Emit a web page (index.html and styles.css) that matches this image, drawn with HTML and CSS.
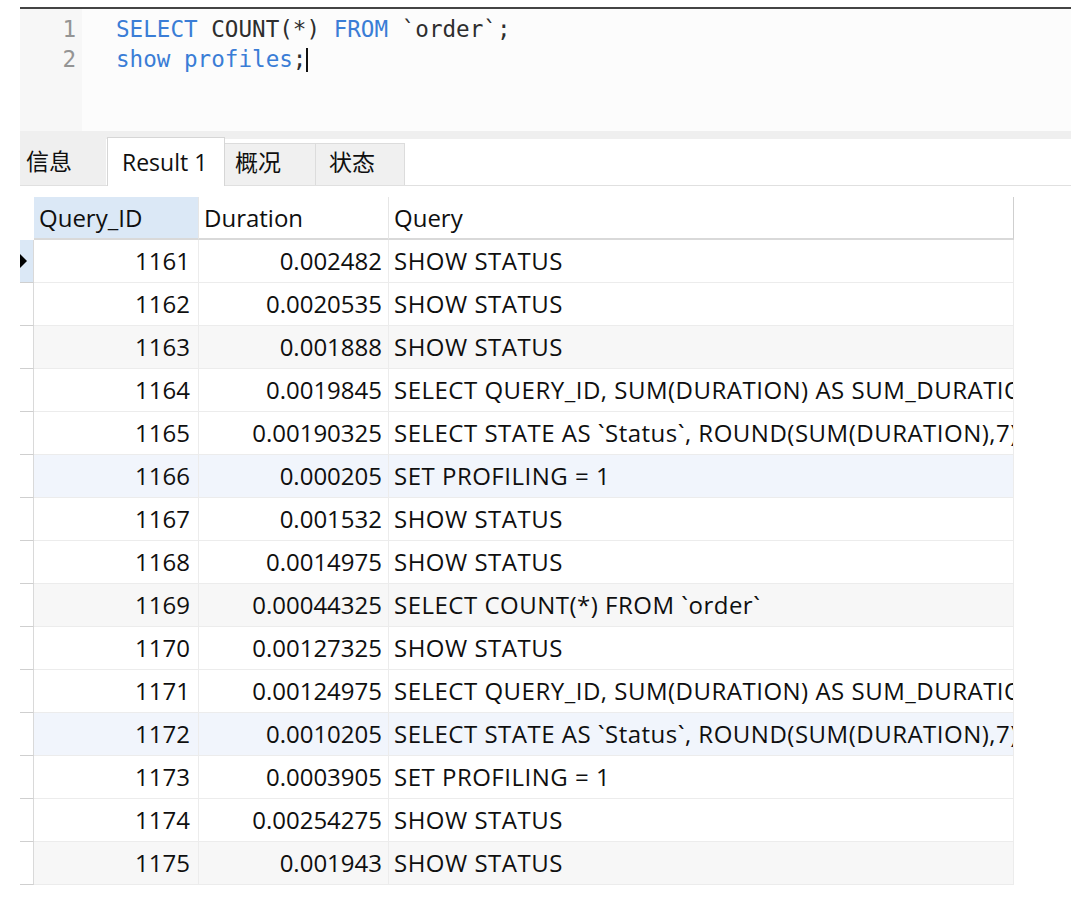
FILE: index.html
```html
<!DOCTYPE html>
<html lang="zh">
<head>
<meta charset="utf-8">
<title>Profiles</title>
<link rel="stylesheet" href="styles.css">
</head>
<body>
<div class="app">
  <div class="topline"></div>
  <div class="editor">
    <div class="gutter"><div>1</div><div>2</div></div>
    <div class="code">
      <div class="line"><span class="kw">SELECT</span> COUNT(*) <span class="kw">FROM</span> `order`;</div>
      <div class="line"><span class="kw">show profiles</span>;<span class="caret"></span></div>
    </div>
  </div>
  <div class="band"></div>
  <div class="tabs">
    <div class="tab tab-info">信息</div>
    <div class="tab tab-active">Result 1</div>
    <div class="tab tab-side tab-overview">概况</div>
    <div class="tab tab-side tab-status">状态</div>
  </div>
  <div class="grid">
    <div class="row head">
      <div class="c ind"></div>
      <div class="c id sel">Query_ID</div>
      <div class="c dur">Duration</div>
      <div class="c q last">Query</div>
    </div>
    <div class="row"><div class="c ind cur"><span class="tri"></span></div><div class="c id">1161</div><div class="c dur">0.002482</div><div class="c q">SHOW STATUS</div></div>
    <div class="row"><div class="c ind"></div><div class="c id">1162</div><div class="c dur">0.0020535</div><div class="c q">SHOW STATUS</div></div>
    <div class="row gray"><div class="c ind"></div><div class="c id">1163</div><div class="c dur">0.001888</div><div class="c q">SHOW STATUS</div></div>
    <div class="row"><div class="c ind"></div><div class="c id">1164</div><div class="c dur">0.0019845</div><div class="c q">SELECT QUERY_ID, SUM(DURATION) AS SUM_DURATION FROM INFORMATION_SCHEMA.PROFILING GROUP BY QUERY_ID</div></div>
    <div class="row"><div class="c ind"></div><div class="c id">1165</div><div class="c dur">0.00190325</div><div class="c q">SELECT STATE AS `Status`, ROUND(SUM(DURATION),7) AS `Duration`</div></div>
    <div class="row blue"><div class="c ind"></div><div class="c id">1166</div><div class="c dur">0.000205</div><div class="c q">SET PROFILING = 1</div></div>
    <div class="row"><div class="c ind"></div><div class="c id">1167</div><div class="c dur">0.001532</div><div class="c q">SHOW STATUS</div></div>
    <div class="row"><div class="c ind"></div><div class="c id">1168</div><div class="c dur">0.0014975</div><div class="c q">SHOW STATUS</div></div>
    <div class="row gray"><div class="c ind"></div><div class="c id">1169</div><div class="c dur">0.00044325</div><div class="c q">SELECT COUNT(*) FROM `order`</div></div>
    <div class="row"><div class="c ind"></div><div class="c id">1170</div><div class="c dur">0.00127325</div><div class="c q">SHOW STATUS</div></div>
    <div class="row"><div class="c ind"></div><div class="c id">1171</div><div class="c dur">0.00124975</div><div class="c q">SELECT QUERY_ID, SUM(DURATION) AS SUM_DURATION FROM INFORMATION_SCHEMA.PROFILING GROUP BY QUERY_ID</div></div>
    <div class="row blue"><div class="c ind"></div><div class="c id">1172</div><div class="c dur">0.0010205</div><div class="c q">SELECT STATE AS `Status`, ROUND(SUM(DURATION),7) AS `Duration`</div></div>
    <div class="row"><div class="c ind"></div><div class="c id">1173</div><div class="c dur">0.0003905</div><div class="c q">SET PROFILING = 1</div></div>
    <div class="row"><div class="c ind"></div><div class="c id">1174</div><div class="c dur">0.00254275</div><div class="c q">SHOW STATUS</div></div>
    <div class="row gray"><div class="c ind"></div><div class="c id">1175</div><div class="c dur">0.001943</div><div class="c q">SHOW STATUS</div></div>
  </div>
</div>
</body>
</html>
```
FILE: styles.css
```css
html, body {
  margin: 0;
  padding: 0;
  background: #ffffff;
}
body {
  font-family: "Open Sans", "Noto Sans CJK SC", sans-serif;
  font-size: 24px;
  color: #0f0f0f;
}
.app {
  padding-top: 7px;
  margin-left: 20px;
}
.topline {
  height: 2px;
  background: #444444;
}
.editor {
  display: flex;
  height: 122px;
  background: #fcfcfc;
  font-family: "DejaVu Sans Mono", "Liberation Mono", monospace;
  font-size: 22.6px;
  line-height: 30px;
}
.gutter {
  width: 56px;
  padding-right: 6px;
  padding-top: 5px;
  text-align: right;
  color: #949494;
  background: #f7f7f7;
}
.code {
  padding-left: 34px;
  padding-top: 5px;
  color: #2e2e2e;
}
.line {
  white-space: nowrap;
}
.kw {
  color: #3a7dd6;
}
.caret {
  display: inline-block;
  width: 2px;
  height: 24px;
  background: #111111;
  vertical-align: -5px;
}
.band {
  height: 8px;
  background: #efefef;
}
.tabs {
  display: flex;
  align-items: flex-end;
  height: 46px;
  border-bottom: 1px solid #e0e0e0;
  font-size: 23px;
  line-height: 30px;
}
.tab {
  box-sizing: border-box;
  padding-bottom: 9px;
  white-space: nowrap;
}
.tab-info {
  width: 86px;
  height: 46px;
  padding-top: 7px;
  padding-left: 6px;
  background: #efefef;
}
.tab-active {
  width: 118px;
  height: 49px;
  margin-left: 1px;
  margin-bottom: -1px;
  padding-top: 9px;
  padding-left: 14px;
  padding-bottom: 10px;
  background: #ffffff;
  border: 1px solid #d6d6d6;
  border-bottom: none;
}
.tab-side {
  height: 42px;
  padding-top: 3px;
  background: #f0f0f0;
  border: 1px solid #dcdcdc;
  border-bottom: none;
}
.tab-overview {
  width: 91px;
  padding-left: 10px;
  border-left: none;
}
.tab-status {
  width: 89px;
  padding-left: 13px;
  border-left: none;
}
.grid {
  margin-top: 11px;
  width: 994px;
}
.row {
  display: grid;
  grid-template-columns: 14px 165px 190px 625px;
  height: 43px;
}
.c {
  box-sizing: border-box;
  height: 43px;
  line-height: 42px;
  border-right: 1px solid #ececec;
  border-bottom: 1px solid #ececec;
  white-space: nowrap;
  overflow: hidden;
}
.ind {
  border-right: 1px solid #d9d9d9;
  border-bottom: 1px solid #cfcfcf;
  position: relative;
}
.cur {
  background: #dbe8f6;
}
.tri {
  position: absolute;
  left: 0;
  top: 14px;
  width: 0;
  height: 0;
  border-top: 7px solid transparent;
  border-bottom: 7px solid transparent;
  border-left: 7px solid #000000;
}
.id {
  text-align: right;
  padding-right: 8px;
}
.dur {
  text-align: right;
  padding-right: 6px;
}
.q {
  padding-left: 5px;
  letter-spacing: 0.5px;
}
.gray .id, .gray .dur, .gray .q {
  background: #f7f7f7;
}
.blue .id, .blue .dur, .blue .q {
  background: #f1f5fc;
}
.head .c {
  line-height: 41px;
  border-bottom: 2px solid #d9d9d9;
}
.head .ind {
  border-right: none;
  border-bottom: none;
}
.head .id, .head .dur {
  text-align: left;
  padding-left: 5px;
  padding-right: 0;
  border-right: 1px solid #e6e6e6;
}
.head .q {
  letter-spacing: 0;
}
.head .sel {
  background: #dbe8f6;
}
.head .last {
  border-right: 1px solid #cfcfcf;
}
```
